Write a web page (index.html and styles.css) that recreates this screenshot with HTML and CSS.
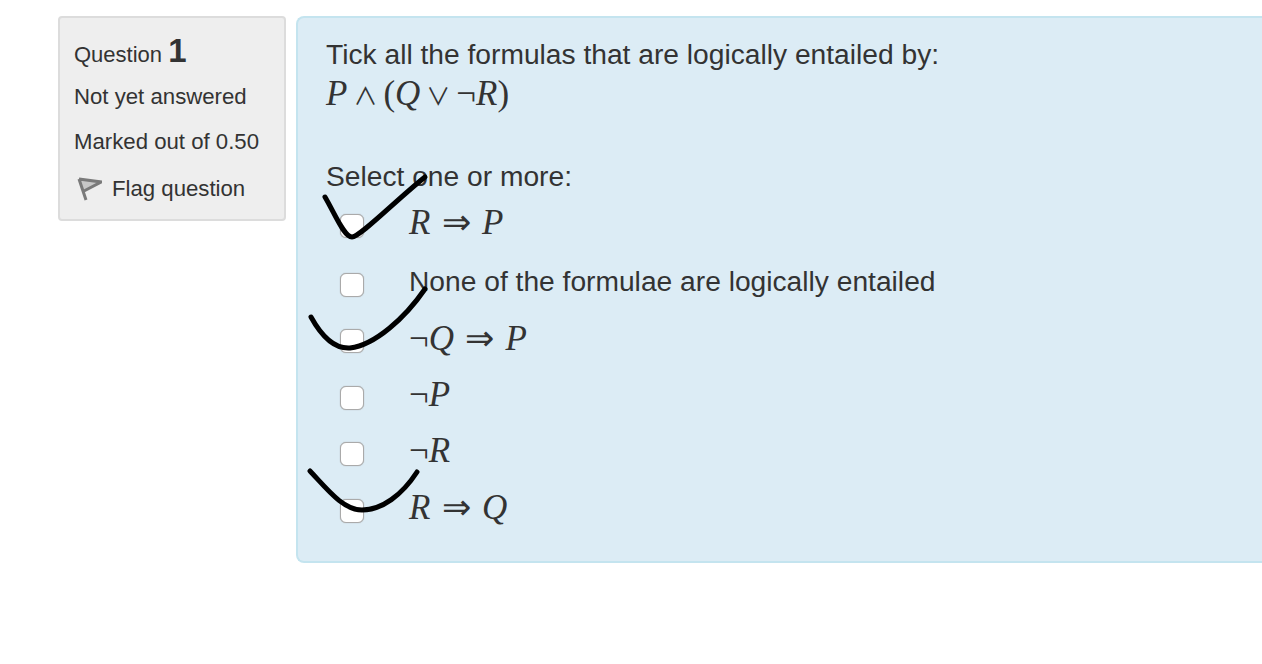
FILE: index.html
```html
<!DOCTYPE html>
<html lang="en">
<head>
  <meta charset="UTF-8" />
  <title>Question 1</title>
  <link rel="stylesheet" href="styles.css">
</head>
<body>

    <div class="que">
        <div class="info">
            <h3 class="qno">Question <span class="num">1</span></h3>
            <div class="state">Not yet answered</div>
            <div class="grade">Marked out of 0.50</div>
            <div class="flag">
                <svg class="flag-icon" width="26" height="26" viewBox="0 0 26 26">
                    <path d="M3 3 L10 24 M3 3 L25 6 L8 15" fill="#c8c8c8" stroke="#7a7a7a" stroke-width="3"/>
                </svg>
                <span>Flag question</span>
            </div>
        </div>

        <div class="content">
            <p class="qtext">Tick all the formulas that are logically entailed by:</p>
            <p class="formula"><i>P</i><span class="op">∧</span>(<i>Q</i><span class="op">∨</span>¬<i>R</i>)</p>
            <p class="prompt">Select one or more:</p>

            <div class="answer">
                <label class="row"><span class="box"></span><span class="math"><i>R</i> ⇒ <i>P</i></span></label>
                <label class="row"><span class="box"></span><span class="plain">None of the formulae are logically entailed</span></label>
                <label class="row"><span class="box"></span><span class="math">¬<i>Q</i> ⇒ <i>P</i></span></label>
                <label class="row"><span class="box"></span><span class="math">¬<i>P</i></span></label>
                <label class="row"><span class="box"></span><span class="math">¬<i>R</i></span></label>
                <label class="row"><span class="box"></span><span class="math"><i>R</i> ⇒ <i>Q</i></span></label>
            </div>
        </div>
    </div>

    <!-- pen marks drawn over the page -->
    <svg class="pen" width="1262" height="664" viewBox="0 0 1262 664">
        <path d="M325 197 C335 214 344 237 352 237 C360 237 395 201 425 177"/>
        <path d="M311 317 C322 337 335 349 350 348 C375 345 405 318 425 289"/>
        <path d="M310 471 C327 489 343 510 362 510 C382 510 402 495 417 472"/>
    </svg>

</body>
</html>
```

FILE: styles.css
```css
body
{
    margin: 0;
    font-family: "Liberation Sans", Arial, sans-serif;
    color: #333;
    background: #fff;
    overflow: hidden;
}

.que
{
    display: flex;
    gap: 10px;
    padding: 16px 0 0 58px;
}

.info
{
    box-sizing: border-box;
    flex: 0 0 228px;
    height: 205px;
    padding: 14px 14px;
    background: #eee;
    border: 2px solid #dcdcdc;
    border-radius: 4px;
    font-size: 22.2px;
}

.qno
{
    margin: 0;
    font-size: 22px;
    font-weight: normal;
    line-height: 38px;
}

.num
{
    font-size: 33px;
    font-weight: bold;
}

.state
{
    margin-top: 7px;
    line-height: 32px;
}

.grade
{
    margin-top: 13px;
    line-height: 32px;
}

.flag
{
    display: flex;
    align-items: center;
    gap: 10px;
    margin-top: 15px;
    line-height: 32px;
}

.flag-icon
{
    margin-left: 2px;
    filter: blur(0.7px);
}

.content
{
    box-sizing: border-box;
    flex: 1;
    height: 547px;
    margin-right: -10px;
    padding: 18px 28px;
    background: #dcecf5;
    border: 2px solid #c4e4ef;
    border-right: none;
    border-radius: 8px 0 0 8px;
}

.content p
{
    margin: 0;
}

.qtext
{
    font-size: 28.2px;
    line-height: 36px;
}

.formula
{
    padding-top: 1px;
    font-family: "Liberation Serif", serif;
    font-size: 35px;
    line-height: 42px;
}

.op
{
    margin: 0 6px;
    font-family: "Noto Sans CJK JP", sans-serif;
    font-size: 24px;
}

.prompt
{
    margin-top: 42px !important;
    font-size: 28.2px;
    line-height: 36px;
}

.answer
{
    display: flex;
    flex-direction: column;
    margin-top: -2px;
}

.row
{
    display: flex;
    align-items: center;
    height: 56.5px;
    padding-left: 14px;
}

/* first row sits a little higher than the even spacing */
.row:first-child
{
    height: 61.5px;
}

.box
{
    box-sizing: border-box;
    width: 24px;
    height: 24px;
    margin-top: 6px;
    margin-right: 45px;
    background: #fff;
    border: 1px solid #aaa;
    border-radius: 6px;
    box-shadow: 0 0 1px #999;
}

.math
{
    font-family: "Liberation Serif", serif;
    font-size: 35px;
    word-spacing: 2.5px;
}

.plain
{
    font-size: 28.2px;
}

.pen
{
    position: absolute;
    top: 0;
    left: 0;
    pointer-events: none;
}

.pen path
{
    fill: none;
    stroke: #000;
    stroke-width: 5;
    stroke-linecap: round;
}
```
